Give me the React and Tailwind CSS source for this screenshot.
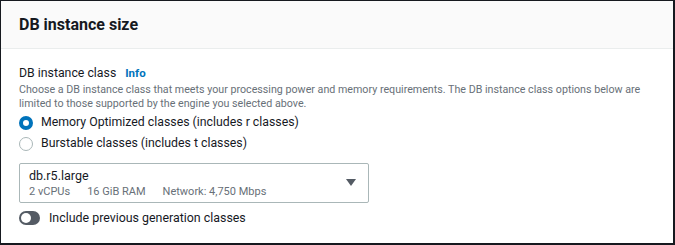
import React from "react";

function Radio({ checked, label }) {
  return (
    <label className="flex items-center gap-[8px] h-[21px]">
      {checked ? (
        <span className="w-[14px] h-[14px] rounded-full border-[4px] border-[#0073bb] bg-white" />
      ) : (
        <span className="w-[14px] h-[14px] rounded-full border-[1.5px] border-[#aab7b8] bg-white" />
      )}
      <span className="text-[12.3px] text-[#16191f]">{label}</span>
    </label>
  );
}

export default function App() {
  return (
    <div
      className="w-[675px] h-[245px] bg-white border-l border-t border-[#16191f] border-r-2 border-b-2 overflow-hidden"
      style={{ fontFamily: 'Roboto, "Noto Sans", Arial, sans-serif' }}
    >
      <div className="h-[48px] bg-[#fafafa] border-b border-[#eaeded] flex items-center pl-[18px]">
        <h2 className="text-[16px] font-bold text-[#16191f]">DB instance size</h2>
      </div>

      <div className="pl-[18px] pt-[14px]">
        <div className="flex items-baseline gap-[9px] leading-[20px]">
          <span className="text-[12.3px] text-[#16191f]">DB instance class</span>
          <span className="text-[11.5px] font-bold text-[#0073bb]">Info</span>
        </div>
        <p className="text-[10.7px] text-[#687078] leading-[14px] w-[640px]">
          Choose a DB instance class that meets your processing power and memory requirements. The DB instance class options below are limited to those supported by the engine you selected above.
        </p>

        <div className="mt-[1px] flex flex-col">
          <Radio checked label="Memory Optimized classes (includes r classes)" />
          <Radio label="Burstable classes (includes t classes)" />
        </div>

        <div className="mt-[9px] w-[350px] h-[40px] border border-[#aab7b8] rounded-[2px] flex items-center justify-between pl-[9px] pr-[12px]">
          <div className="flex flex-col">
            <span className="text-[12.5px] text-[#16191f] leading-[16px]">db.r5.large</span>
            <div className="flex gap-[17px] text-[11px] text-[#687078] leading-[15px]">
              <span>2 vCPUs</span>
              <span>16 GiB RAM</span>
              <span>Network: 4,750 Mbps</span>
            </div>
          </div>
          <svg width="10" height="8" viewBox="0 0 10 8">
            <path d="M0 0 H10 L5 7 Z" fill="#545b64" />
          </svg>
        </div>

        <div className="mt-[6px] flex items-center gap-[9px]">
          <span className="w-[21px] h-[14px] rounded-full bg-[#545b64] flex items-center pl-[2px]">
            <span className="w-[10px] h-[10px] rounded-full bg-white" />
          </span>
          <span className="text-[12.4px] text-[#16191f]">Include previous generation classes</span>
        </div>
      </div>
    </div>
  );
}
